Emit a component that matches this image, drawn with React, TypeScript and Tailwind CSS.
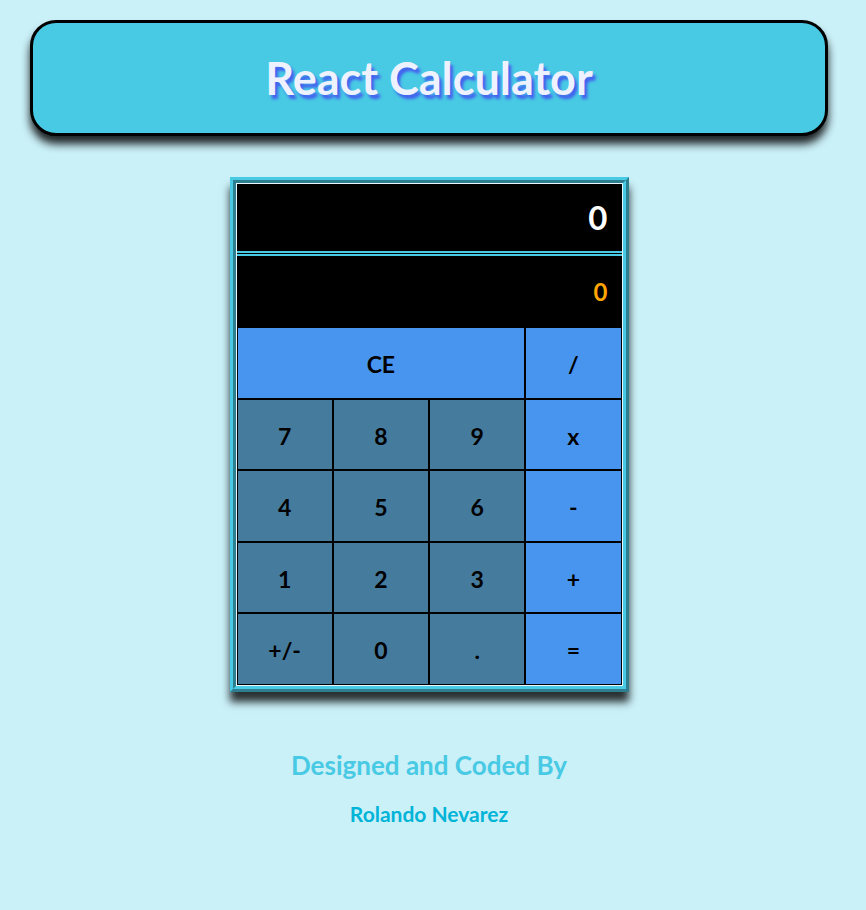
import React from "react";

const digit = "bg-[#457b9d]";
const op = "bg-[#4895ef]";

type B = { label: string; cls: string; span?: boolean };

const buttons: B[] = [
  { label: "CE", cls: op, span: true },
  { label: "/", cls: op },
  { label: "7", cls: digit },
  { label: "8", cls: digit },
  { label: "9", cls: digit },
  { label: "x", cls: op },
  { label: "4", cls: digit },
  { label: "5", cls: digit },
  { label: "6", cls: digit },
  { label: "-", cls: op },
  { label: "1", cls: digit },
  { label: "2", cls: digit },
  { label: "3", cls: digit },
  { label: "+", cls: op },
  { label: "+/-", cls: digit },
  { label: "0", cls: digit },
  { label: ".", cls: digit },
  { label: "=", cls: op },
];

export default function App() {
  return (
    <div
      className="min-h-[910px] w-full bg-[#caf0f8]"
      style={{ fontFamily: "Lato, 'Open Sans', sans-serif" }}
    >
      <div className="flex w-[858px] flex-col items-center pt-[20px]">
        <header className="flex h-[116px] w-[798px] items-center justify-center rounded-[26px] border-[3px] border-black bg-[#48cae4] shadow-[0_8px_8px_rgba(0,0,0,0.85)]">
          <h1 className="text-[45px] font-bold leading-none text-[#eef2ff] [text-shadow:3px_4px_3px_#4361ee]">
            React Calculator
          </h1>
        </header>

        <div className="mt-[41px] w-[399px] border-[6px] border-[#48cae4] shadow-[0_10px_8px_rgba(0,0,0,0.8)] [border-style:ridge]">
          <div className="border border-[#e8f8fc] bg-black">
            <div className="flex h-[69px] items-center justify-end border-b-2 border-[#48cae4] pr-[14px] text-[33px] font-bold text-white">
              0
            </div>
            <div className="mt-px flex h-[73px] items-center justify-end border-t-2 border-[#48cae4] pr-[14px] text-[24px] font-bold text-[#ffa500]">
              0
            </div>
            <div className="grid grid-cols-4">
              {buttons.map((b, i) => (
                <div
                  key={i}
                  className={`${b.cls} ${b.span ? "col-span-3" : ""} flex h-[71.6px] items-center justify-center border border-black pt-[3px] text-[23px] font-bold text-black`}
                >
                  {b.label}
                </div>
              ))}
            </div>
          </div>
        </div>

        <p className="mt-[54px] text-[26px] font-bold text-[#48cae4]">
          Designed and Coded By
        </p>
        <p className="mt-[13px] text-[21px] font-bold text-[#00b4d8]">
          Rolando Nevarez
        </p>
      </div>
    </div>
  );
}
